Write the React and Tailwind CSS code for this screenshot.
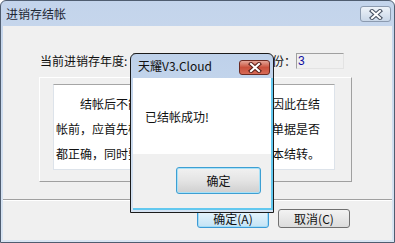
import React from 'react'

const FONT = "font-['Noto_Sans_CJK_SC','Noto_Sans',sans-serif]"

function XGlyph({ outline = '#4b5565' }) {
  return (
    <svg width="14" height="11" viewBox="0 0 14 11">
      <path d="M3 2 L11 9 M11 2 L3 9" stroke={outline} strokeWidth="4.2" strokeLinecap="square" fill="none" />
      <path d="M3 2 L11 9 M11 2 L3 9" stroke="#ffffff" strokeWidth="2" strokeLinecap="square" fill="none" />
    </svg>
  )
}

function SuccessDialog() {
  return (
    <div className="absolute left-[129px] top-[52px] w-[144px] h-[160px] flex flex-col rounded-t-[6px] border border-[#1b1b1b] bg-gradient-to-b from-[#bed1ea] to-[#d6e3f2]">
      <div className="h-[24px] flex items-center justify-between pl-[7px] pr-[3px]">
        <span className="text-[12px] text-[#111]">天耀V3.Cloud</span>
        <div className="w-[31px] h-[15px] mt-[2px] rounded-[3px] border border-[#6c2a22] bg-gradient-to-b from-[#e3a497] via-[#c9503c] to-[#d66a56] flex items-center justify-center">
          <XGlyph outline="#5b211b" />
        </div>
      </div>
      <div className="flex-1 flex flex-col ml-[2px] mb-[2px] border-r-2 border-b-2 border-[#62c8ef] bg-[#f0f0f0]">
        <div className="h-[76px] bg-white flex items-start pl-[12px] pt-[30px]">
          <span className="text-[12px] text-[#111]">已结帐成功!</span>
        </div>
        <div className="flex-1 flex items-start justify-end pt-[13px] pr-[10px]">
          <div className="w-[85px] h-[27px] rounded-[3px] border border-[#3d9fd3] shadow-[inset_0_0_0_1px_#a9e1f7] bg-gradient-to-b from-[#f1f1f1] via-[#e4e4e4] to-[#cfcfcf] flex items-center justify-center">
            <span className="text-[12px] text-[#111]">确定</span>
          </div>
        </div>
      </div>
    </div>
  )
}

export default function App() {
  return (
    <div className={`relative w-[395px] h-[243px] flex flex-col rounded-t-[6px] border border-[#4f5d70] bg-gradient-to-b from-[#c3d4eb] to-[#d9e5f3] ${FONT}`}>
      <div className="h-[25px] flex items-center justify-between pl-[5px] pr-[3px]">
        <span className="text-[12px] text-[#1d2633]">进销存结帐</span>
        <div className="w-[31px] h-[16px] mt-[1px] rounded-[3px] border border-[#8c9bb0] bg-gradient-to-b from-[#eef3f9] to-[#c9d7e8] flex items-center justify-center">
          <XGlyph />
        </div>
      </div>
      <div className="flex-1 flex flex-col mx-[2px] mb-[2px] bg-[#f0f0f0]">
        <div className="flex items-center h-[16px] mt-[27px] pl-[37px] text-[12px] text-[#111]">
          <span className="w-[91px] shrink-0 whitespace-nowrap">当前进销存年度:</span>
          <div className="w-[116px] shrink-0 h-[16px] ml-[2px] border border-[#a0a0a0] bg-white" />
          <span className="w-[36px] shrink-0 ml-[11px] whitespace-nowrap">月份：</span>
          <div className="w-[48px] shrink-0 h-[16px] border-t border-l border-[#a0a0a0] border-r border-b border-r-[#e3e3e3] border-b-[#e3e3e3] bg-[#f0f0f0] flex items-center pl-[1px]">
            <span className="text-[12px] leading-none text-[#1010a0] font-['Liberation_Sans',sans-serif]">3</span>
          </div>
        </div>
        <div className="ml-[36px] mr-[40px] mt-[8px] h-[105px] border-t border-l border-white border-b border-r border-b-[#a0a0a0] border-r-[#a0a0a0] pt-[6px] pl-[13px] pr-[16px] pb-[11px]">
          <div className="h-full bg-white border border-[#dde3ea] border-t-[#a5a5a5] pt-[6px] pl-[2px] text-[12px] leading-[25px] text-[#111] whitespace-nowrap overflow-hidden">
            <div className="pl-[24px]">结帐后不能再录入本年度业务单据，因此在结</div>
            <div>帐前，应首先检查本年度所有录入的业务单据是否</div>
            <div>都正确，同时要做好数据备份以及年度成本结转。</div>
          </div>
        </div>
        <div className="mt-[17px] border-t border-[#a0a0a0] border-b border-b-white" />
        <div className="flex justify-end gap-[9px] mt-[8px] pr-[42px]">
          <div className="w-[72px] shrink-0 h-[19px] rounded-[3px] border border-[#3c9ad6] shadow-[inset_0_0_0_1px_#a4dcf5] bg-gradient-to-b from-[#eaf6fd] to-[#c4e3f5] flex items-center justify-center text-[12px] text-[#111]">
            确定(A)
          </div>
          <div className="w-[72px] shrink-0 h-[19px] rounded-[3px] border border-[#707070] bg-gradient-to-b from-[#f3f3f3] to-[#dcdcdc] flex items-center justify-center text-[12px] text-[#111]">
            取消(C)
          </div>
        </div>
      </div>
      <SuccessDialog />
    </div>
  )
}
